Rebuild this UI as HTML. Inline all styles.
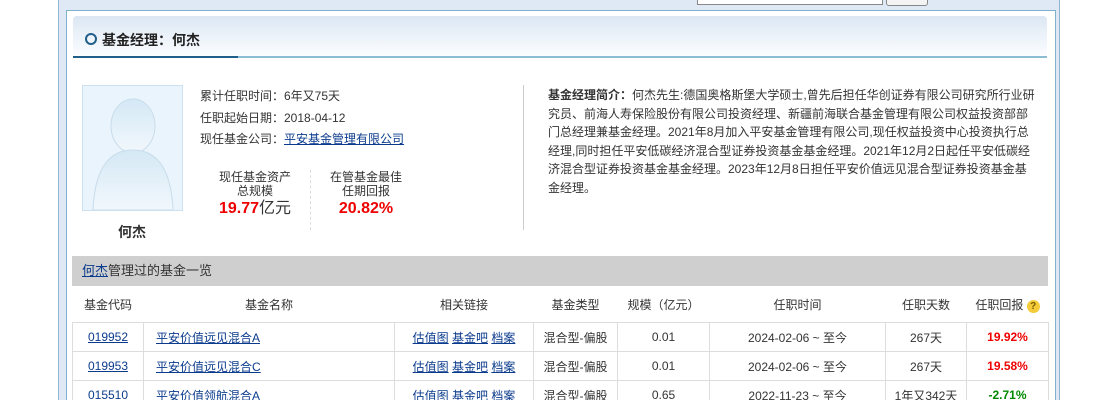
<!DOCTYPE html>
<html style="overflow:hidden"><head><meta charset="utf-8"><style>
html,body{margin:0;width:1120px;height:400px;overflow:hidden}
body{background:#fff;font-family:"Liberation Sans","Noto Sans CJK SC",sans-serif;font-size:12px;color:#333;position:relative}
.abs{position:absolute}
a{color:#0b3b8c;text-decoration:underline}
table{border-collapse:collapse;position:absolute;left:72px;top:286px;width:976px;table-layout:fixed}
td,th{font-weight:normal;text-align:center;height:28px;border:1px solid #ddd;padding:0;white-space:nowrap}
th{height:36px;border:none;border-bottom:1px solid #ddd}
.red{color:#e00;font-weight:bold}.grn{color:#080;font-weight:bold}
</style></head><body>
<div class="abs" style="left:58px;top:-2px;width:1000px;height:402px;background:#dfe9f5;border-left:1px solid #8fb6cf;border-right:1px solid #8fb6cf"></div>
<div class="abs" style="left:697px;top:-4px;width:184px;height:7px;background:#fff;border:1px solid #888"></div>
<div class="abs" style="left:886px;top:-4px;width:40px;height:8px;background:#f4f4f4;border:1px solid #888;border-radius:3px"></div>
<div class="abs" style="left:66px;top:10px;width:988px;height:390px;background:#fff;border:1px solid #7fb0cc;border-bottom:none"></div>
<div class="abs" style="left:73px;top:16px;width:974px;height:40px;background:linear-gradient(#dce7f3,#fbfdff);border-radius:4px 4px 0 0"></div>
<div class="abs" style="left:73px;top:56px;width:974px;height:2px;background:#8bbdd4"></div>
<div class="abs" style="left:73px;top:56px;width:165px;height:2px;background:#1f5f8a"></div>
<div class="abs" style="left:85px;top:33px;width:8px;height:8px;border:2px solid #1f5f8a;border-radius:50%"></div>
<div class="abs" style="left:102px;top:30px;font-size:14px;font-weight:bold;color:#222">基金经理：何杰</div>
<div class="abs" style="left:82px;top:85px;width:99px;height:124px;background:#eaf4fc;border:1px solid #cde0f0;overflow:hidden">
<svg width="99" height="124"><defs><linearGradient id="g" x1="0" y1="0" x2="0" y2="1"><stop offset="0" stop-color="#d4e8f5"/><stop offset="1" stop-color="#f2f8fc"/></linearGradient></defs>
<ellipse cx="50" cy="40" rx="22" ry="27" fill="url(#g)" stroke="#c8dceb"/>
<path d="M10 124 C12 80 28 64 50 64 C72 64 88 80 90 124Z" fill="url(#g)" stroke="#c8dceb"/></svg></div>
<div class="abs" style="left:82px;top:222px;width:100px;text-align:center;font-size:14px;font-weight:bold;color:#333">何杰</div>
<div class="abs" style="left:200px;top:86px;line-height:21.5px">累计任职时间：6年又75天<br>任职起始日期：2018-04-12<br>现任基金公司：<a>平安基金管理有限公司</a></div>
<div class="abs" style="left:200px;top:170px;width:110px;text-align:center;line-height:14px">现任基金资产<br>总规模<div style="margin-top:4px;font-size:16px"><b style="color:#e00">19.77</b>亿元</div></div>
<div class="abs" style="left:310px;top:170px;width:0;height:60px;border-left:1px dashed #ddd"></div>
<div class="abs" style="left:311px;top:170px;width:110px;text-align:center;line-height:14px">在管基金最佳<br>任期回报<div style="margin-top:4px;font-size:16px"><b style="color:#e00">20.82%</b></div></div>
<div class="abs" style="left:523px;top:85px;width:1px;height:145px;background:#ccc"></div>
<div class="abs" style="left:548px;top:86px;width:489px;line-height:18.6px"><b>基金经理简介：</b>何杰先生:德国奥格斯堡大学硕士,曾先后担任华创证券有限公司研究所行业研究员、前海人寿保险股份有限公司投资经理、新疆前海联合基金管理有限公司权益投资部部门总经理兼基金经理。2021年8月加入平安基金管理有限公司,现任权益投资中心投资执行总经理,同时担任平安低碳经济混合型证券投资基金基金经理。2021年12月2日起任平安低碳经济混合型证券投资基金基金经理。2023年12月8日担任平安价值远见混合型证券投资基金基金经理。</div>
<div class="abs" style="left:72px;top:256px;width:976px;height:30px;background:#cfcfcf;font-size:13px;line-height:30px"><span style="padding-left:10px"><a>何杰</a>管理过的基金一览</span></div>
<table>
<colgroup><col width="71"><col width="251"><col width="139"><col width="84"><col width="92"><col width="176"><col width="81"><col width="82"></colgroup>
<tr><th>基金代码</th><th>基金名称</th><th>相关链接</th><th>基金类型</th><th>规模（亿元）</th><th>任职时间</th><th>任职天数</th><th>任职回报 <span style="display:inline-block;width:13px;height:13px;border-radius:50%;background:#f4cc3a;color:#7a5a00;font-size:10px;line-height:13px;font-weight:bold">?</span></th></tr>
<tr><td><a>019952</a></td><td style="text-align:left;padding-left:12px"><a>平安价值远见混合A</a></td><td><a>估值图</a> <a>基金吧</a> <a>档案</a></td><td>混合型-偏股</td><td>0.01</td><td>2024-02-06 ~ 至今</td><td>267天</td><td class="red">19.92%</td></tr>
<tr><td><a>019953</a></td><td style="text-align:left;padding-left:12px"><a>平安价值远见混合C</a></td><td><a>估值图</a> <a>基金吧</a> <a>档案</a></td><td>混合型-偏股</td><td>0.01</td><td>2024-02-06 ~ 至今</td><td>267天</td><td class="red">19.58%</td></tr>
<tr><td><a>015510</a></td><td style="text-align:left;padding-left:12px"><a>平安价值领航混合A</a></td><td><a>估值图</a> <a>基金吧</a> <a>档案</a></td><td>混合型-偏股</td><td>0.65</td><td>2022-11-23 ~ 至今</td><td>1年又342天</td><td class="grn">-2.71%</td></tr>
</table>
</body></html>
